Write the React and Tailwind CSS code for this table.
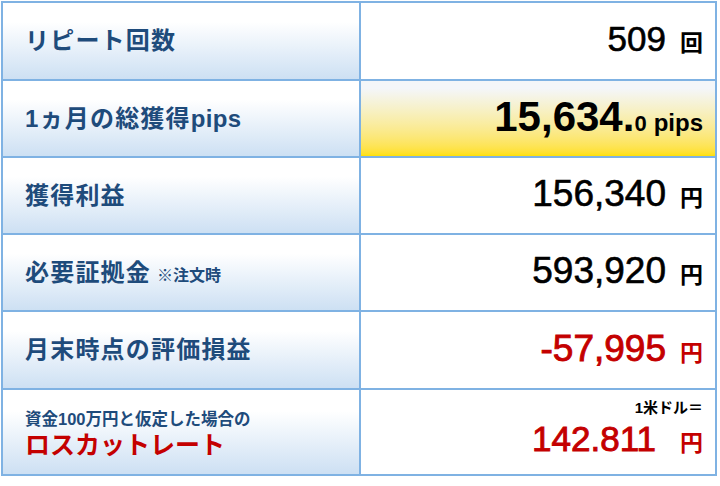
import React from 'react'

const rows = [
  { label: 'リピート回数', value: '509', unit: '回', size: 'text-[35px]', h: 'h-[78px]' },
  { label: '1ヵ月の総獲得', suffix: 'pips', pips: true, h: 'h-[77px]' },
  { label: '獲得利益', value: '156,340', unit: '円', size: 'text-[37px]', h: 'h-[77px]' },
  { label: '必要証拠金', note: '※注文時', value: '593,920', unit: '円', size: 'text-[37px]', h: 'h-[77px]' },
  { label: '月末時点の評価損益', value: '-57,995', unit: '円', size: 'text-[37px]', red: true, h: 'h-[78px]' },
]

const leftCell = 'border-2 border-[#7fb2e3] bg-gradient-to-b from-white from-25% to-[#cde0f3] pl-[22px] text-left align-middle'
const rightCell = 'border-2 border-[#7fb2e3] pr-[12px] text-right align-middle'

const App = () => {
  return (
    <div className="w-[720px] h-[486px] bg-white pt-px pl-px" style={{ fontFamily: '"Liberation Sans", "Noto Sans CJK JP", sans-serif' }}>
      <table className="w-[716px] border-collapse table-fixed">
        <colgroup>
          <col className="w-[358px]" />
          <col />
        </colgroup>
        <tbody>
          {rows.map((r) => (
            <tr key={r.label} className={r.h}>
              <td className={leftCell}>
                <span className="text-[24px] font-bold text-[#1e4b7b] tracking-[1.2px]">{r.label}</span>
                {r.suffix && <span className="text-[24px] font-bold text-[#1e4b7b] tracking-[0.3px]">{r.suffix}</span>}
                {r.note && <span className="ml-[6px] text-[16px] font-bold text-[#1e4b7b]">{r.note}</span>}
              </td>
              {r.pips ? (
                <td className={`${rightCell} bg-gradient-to-b from-[#f4f6f9] from-10% to-[#ffe000]`}>
                  <span className="text-[42px] font-bold text-black leading-none">15,634.</span>
                  <span className="text-[22px] font-bold text-black">0</span>
                  <span className="ml-[7px] text-[24px] font-bold text-black">pips</span>
                </td>
              ) : (
                <td className={`${rightCell} bg-white`}>
                  <span className={`${r.size} leading-none ${r.red ? 'text-[#c40000] [-webkit-text-stroke:0.9px_#c40000]' : 'text-black [-webkit-text-stroke:0.6px_black]'}`}>{r.value}</span>
                  <span className={`ml-[14px] text-[23px] font-bold ${r.red ? 'text-[#c40000]' : 'text-black'}`}>{r.unit}</span>
                </td>
              )}
            </tr>
          ))}
          <tr className="h-[86px]">
            <td className={leftCell}>
              <div className="text-[16.5px] font-bold text-[#1e4b7b] leading-[20px] pt-[6px]">資金100万円と仮定した場合の</div>
              <div className="text-[25px] font-bold text-[#c40000] leading-[32px]">ロスカットレート</div>
            </td>
            <td className={`${rightCell} bg-white`}>
              <div className="text-[15px] font-bold text-black leading-[20px]">1米ドル＝</div>
              <div className="leading-[42px]">
                <span className="text-[35px] text-[#c40000] [-webkit-text-stroke:0.9px_#c40000]">142.811</span>
                <span className="ml-[24px] text-[23px] font-bold text-[#c40000]">円</span>
              </div>
            </td>
          </tr>
        </tbody>
      </table>
    </div>
  )
}

export default App
